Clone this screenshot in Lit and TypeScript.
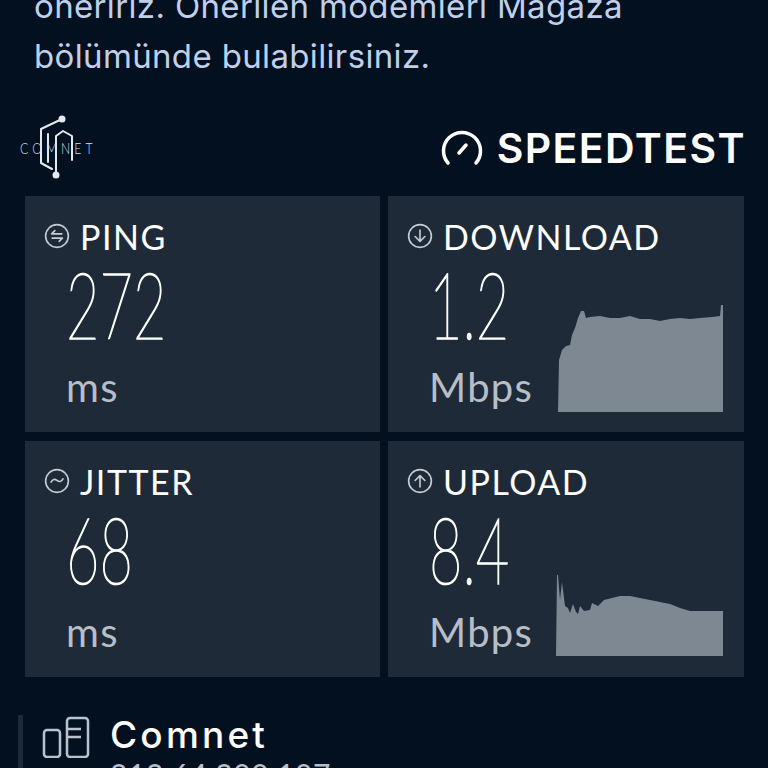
import { LitElement, html, css, svg } from "lit";
import { customElement } from "lit/decorators.js";

const dl = "558,412 559,360 562,350 566,346 570,345 572,335 575,328 578,318 581,311 584,311 586,318 590,317 600,316 610,318 620,318 630,316 640,319 650,319 660,321 670,319 680,318 690,319 700,318 712,317 720,316 721,305 723,305 723,412";
const ul = "556,656 557,575 558,575 560,600 562,582 565,606 568,608 570,613 573,604 576,612 578,614 580,606 584,611 590,610 592,603 598,606 604,600 612,598 620,596 630,596 640,598 650,600 660,602 670,604 680,608 690,611 723,611 723,656";

const ICONS: Record<string, unknown> = {
  ping: svg`<path d="M16.500 10H7l3-3M7.500 14H17l-3 3"/>`,
  down: svg`<path d="M12 6.500v10.500M7.500 12.500l4.500 4.500 4.500-4.500"/>`,
  jitter: svg`<path d="M6.500 13c1.500-3 3.500-3 5.500-1.500s4 1.500 5.500-1.500"/>`,
  up: svg`<path d="M12 17.500V7M7.500 11.500L12 7l4.500 4.500"/>`,
};

@customElement("app-root")
export class AppRoot extends LitElement {
  static styles = css`
    :host { display: block; width: 768px; height: 768px; overflow: hidden; background: #03101f; font-family: "Inter", sans-serif; }
    .page { display: flex; flex-direction: column; padding: 0 24px 0 25px; margin-top: -19px; }
    .intro { margin: 0 0 0 9px; font-size: 33px; line-height: 50px; letter-spacing: 0.35px; color: #c0d0ea; white-space: nowrap; }
    .brand { display: flex; justify-content: space-between; align-items: center; height: 115px; padding-top: 19px; box-sizing: border-box; margin-left: -7px; }
    .comnet { position: relative; width: 76px; height: 66px; }
    .comnet svg { position: absolute; left: 0; top: 0; }
    .comnet span { position: absolute; left: 2px; top: 23px; font-family: "Lato", sans-serif; font-weight: 300; font-size: 16px; letter-spacing: 5.400px; color: #d8dee6; white-space: nowrap; transform: scaleX(0.76); transform-origin: left center; }
    .speed { display: flex; align-items: center; gap: 14px; margin-right: -2px; }
    .speed b { font-family: "Inter", sans-serif; font-weight: 600; font-size: 41px; letter-spacing: 1.400px; color: #fff; }
    .grid { display: grid; grid-template-columns: 355px 356px; grid-auto-rows: 236px; gap: 9px 8px; }
    .card { background: #1f2a38; padding: 20px 0 0 19px; display: flex; flex-direction: column; position: relative; }
    .head { display: flex; align-items: center; gap: 10px; height: 40px; color: #fff; font-family: "Lato", sans-serif; font-size: 34px; letter-spacing: 1.500px; }
    .head svg { flex: none; }
    .value { margin: 8px 0 0 22px; height: 78px; display: flex; align-items: center; font-family: "Lato", sans-serif; font-weight: 100; font-size: 93px; line-height: 78px; color: #fff; -webkit-text-stroke: 1.700px #fff; transform: scaleX(0.62); transform-origin: left center; white-space: nowrap; }
    .unit { margin: 25px 0 0 22px; font-family: "Lato", sans-serif; font-size: 40px; line-height: 40px; letter-spacing: 1.300px; color: #b8bec6; }
    .chart { position: absolute; left: 0; top: 0; width: 100%; height: 100%; pointer-events: none; }
    .foot { display: flex; margin: 38px 0 0 -7px; }
    .rule { width: 5px; height: 60px; background: #1f2a38; flex: none; }
    .foot svg { margin: 1px 0 0 19px; flex: none; }
    .who { margin-left: 20px; display: flex; flex-direction: column; }
    .who strong { font-family: "Inter", sans-serif; font-weight: 500; font-size: 37px; line-height: 40px; color: #fff; letter-spacing: 3.200px; }
    .who span { font-family: "Lato", sans-serif; font-size: 30px; line-height: 34px; margin-top: 2px; letter-spacing: 0.600px; color: #b8bec6; white-space: nowrap; }
  `;

  private card(icon: string, label: string, value: string, unit: string, pts: string | null, ox: number, oy: number) {
    return html`<div class="card">
      <div class="head">
        <svg width="26" height="26" viewBox="0 0 24 24" fill="none" stroke="#c5ccd4" stroke-width="1.500" stroke-linecap="round" stroke-linejoin="round"><circle cx="12" cy="12" r="10.500"/>${ICONS[icon]}</svg>
        <span>${label}</span>
      </div>
      <div class="value">${value}</div>
      <div class="unit">${unit}</div>
      ${pts ? html`<svg class="chart" viewBox="${ox} ${oy} 356 236"><polygon points=${pts} fill="#7e8893"/></svg>` : ""}
    </div>`;
  }

  render() {
    return html`<div class="page">
      <p class="intro">öneririz. Önerilen modemleri Mağaza<br />bölümünde bulabilirsiniz.</p>
      <div class="brand">
        <div class="comnet">
          <svg width="76" height="66" viewBox="0 0 76 66" fill="none" stroke="#e4e9ef" stroke-width="2" stroke-linecap="round" stroke-linejoin="round">
            <path d="M44 4L23 14V48L34 54"/><path d="M30 19V47"/><path d="M38 60V21L45 16L54 21V45"/>
            <circle cx="44" cy="4" r="2.500" fill="#e4e9ef"/><circle cx="38" cy="60" r="2.500" fill="#e4e9ef"/>
          </svg>
          <span>COMNET</span>
        </div>
        <div class="speed">
          <svg width="42" height="36" viewBox="0 0 42 36" fill="none" stroke="#fff" stroke-width="3.500" stroke-linecap="round"><path d="M7 33A18.500 18.500 0 1 1 35 33"/><path d="M18 23l7-8"/></svg>
          <b>SPEEDTEST</b>
        </div>
      </div>
      <div class="grid">
        ${this.card("ping", "PING", "272", "ms", null, 0, 0)}
        ${this.card("down", "DOWNLOAD", "1.2", "Mbps", dl, 388, 196)}
        ${this.card("jitter", "JITTER", "68", "ms", null, 0, 0)}
        ${this.card("up", "UPLOAD", "8.4", "Mbps", ul, 388, 441)}
      </div>
      <div class="foot">
        <div class="rule"></div>
        <svg width="48" height="42" viewBox="0 0 48 42" fill="none" stroke="#b9c3cf" stroke-width="2.500" stroke-linejoin="round"><rect x="2" y="14" width="16" height="27" rx="3"/><rect x="25" y="2" width="21" height="39" rx="3"/><path d="M25 13h14M25 21h14"/></svg>
        <div class="who"><strong>Comnet</strong><span>212.64.200.107</span></div>
      </div>
    </div>`;
  }
}
